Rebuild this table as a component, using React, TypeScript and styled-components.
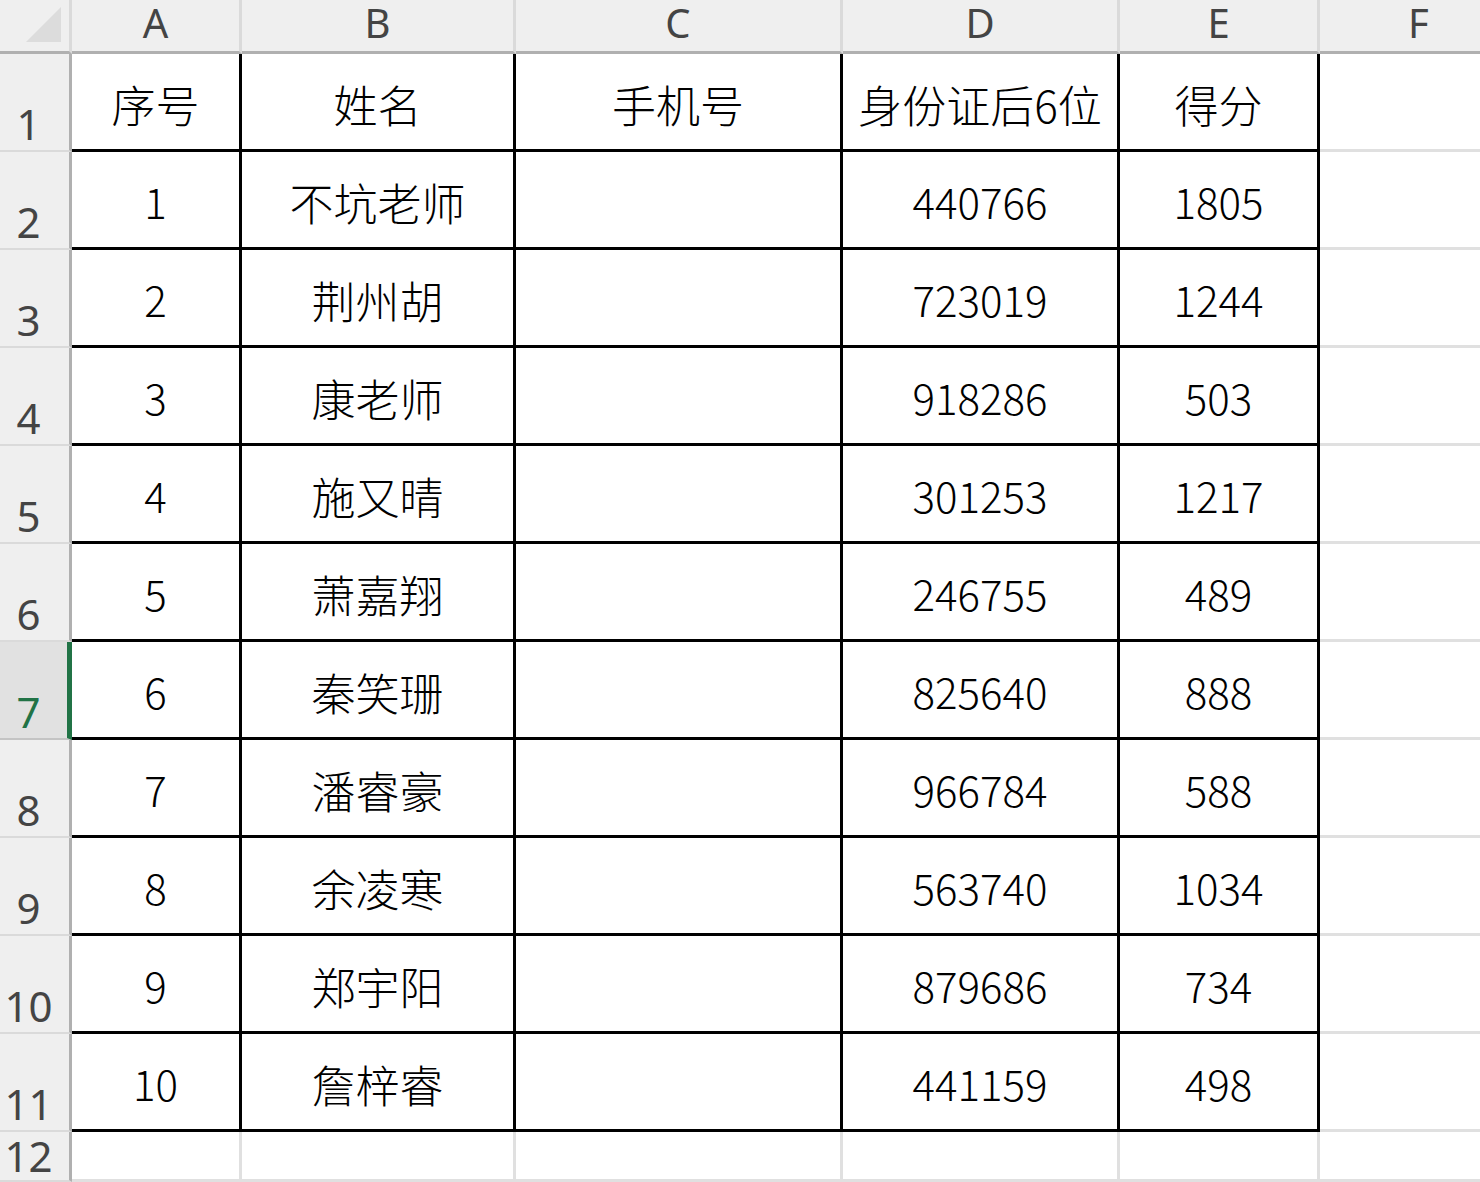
import React from "react";
import styled, { createGlobalStyle } from "styled-components";

const Global = createGlobalStyle`
  html, body { margin: 0; padding: 0; background: #ffffff; overflow: hidden; }
  #root { width: 1480px; height: 1182px; overflow: hidden; }
`;

const Sheet = styled.div`
  display: grid;
  grid-template-columns: 72px 170px 274px 327px 277px 200px 200px;
  grid-template-rows: 54px repeat(11, 98px) 50px;
  width: 1520px;
  height: 1182px;
  background: #ffffff;
`;

const Corner = styled.div`
  box-sizing: border-box;
  background: #efefef;
  border-right: 3px solid #dadada;
  border-bottom: 3px solid #b0b0b0;
  display: flex;
  align-items: flex-end;
  justify-content: flex-end;
  padding: 0 8px 9px 0;
`;

const Triangle = styled.svg`
  display: block;
`;

const ColHeader = styled.div`
  box-sizing: border-box;
  background: #efefef;
  border-right: 3px solid #dadada;
  border-bottom: 3px solid #b0b0b0;
  display: flex;
  align-items: flex-start;
  justify-content: center;
  font-family: "Noto Sans", "Open Sans", sans-serif;
  font-size: 40px;
  line-height: 1;
  color: #444444;
  padding-top: 3px;
`;

const RowHeader = styled.div<{ $selected?: boolean; $short?: boolean }>`
  box-sizing: border-box;
  background: ${(p) => (p.$selected ? "#e1e1e1" : "#efefef")};
  border-right: ${(p) => (p.$selected ? "5px solid #217346" : "3px solid #b0b0b0")};
  border-bottom: 2px solid ${(p) => (p.$selected ? "#c4c4c4" : "#dadada")};
  display: flex;
  align-items: flex-end;
  justify-content: center;
  padding: 0 ${(p) => (p.$selected ? "10px" : "12px")} ${(p) => (p.$short ? "0px" : "2px")} 0;
  font-family: "Noto Sans", "Open Sans", sans-serif;
  font-size: 42px;
  line-height: 1.15;
  color: ${(p) => (p.$selected ? "#217346" : "#444444")};
`;

const Cell = styled.div<{ $table?: boolean; $cjk?: boolean }>`
  box-sizing: border-box;
  border-right: 3px solid ${(p) => (p.$table ? "#000000" : "#e0e0e0")};
  border-bottom: 3px solid ${(p) => (p.$table ? "#000000" : "#e0e0e0")};
  display: flex;
  align-items: center;
  justify-content: center;
  padding-top: ${(p) => (p.$cjk ? "5px" : "3px")};
  font-family: "Noto Sans CJK SC", "Noto Sans", sans-serif;
  font-weight: 300;
  font-size: ${(p) => (p.$cjk ? "44px" : "42px")};
  line-height: 1.2;
  color: #000000;
  white-space: nowrap;
`;

const columns = ["A", "B", "C", "D", "E", "F"];

const headerRow = ["序号", "姓名", "手机号", "身份证后6位", "得分"];

const data: string[][] = [
  ["1", "不坑老师", "", "440766", "1805"],
  ["2", "荆州胡", "", "723019", "1244"],
  ["3", "康老师", "", "918286", "503"],
  ["4", "施又晴", "", "301253", "1217"],
  ["5", "萧嘉翔", "", "246755", "489"],
  ["6", "秦笑珊", "", "825640", "888"],
  ["7", "潘睿豪", "", "966784", "588"],
  ["8", "余凌寒", "", "563740", "1034"],
  ["9", "郑宇阳", "", "879686", "734"],
  ["10", "詹梓睿", "", "441159", "498"],
];

const hasCjk = (s: string) => /[\u4e00-\u9fff]/.test(s);

export default function App() {
  const rows = [headerRow, ...data];
  return (
    <>
      <Global />
      <Sheet>
        <Corner>
          <Triangle width="35" height="35" viewBox="0 0 35 35">
            <polygon points="35,0 35,35 0,35" fill="#dcdcdc" />
          </Triangle>
        </Corner>
        {columns.map((c) => (
          <ColHeader key={c}>{c}</ColHeader>
        ))}
        {rows.map((r, i) => (
          <React.Fragment key={i}>
            <RowHeader $selected={i === 6}>{i + 1}</RowHeader>
            {r.map((v, j) => (
              <Cell key={j} $table $cjk={hasCjk(v)}>
                {v}
              </Cell>
            ))}
            <Cell />
          </React.Fragment>
        ))}
        <RowHeader $short>12</RowHeader>
        {columns.map((c) => (
          <Cell key={c} />
        ))}
      </Sheet>
    </>
  );
}
